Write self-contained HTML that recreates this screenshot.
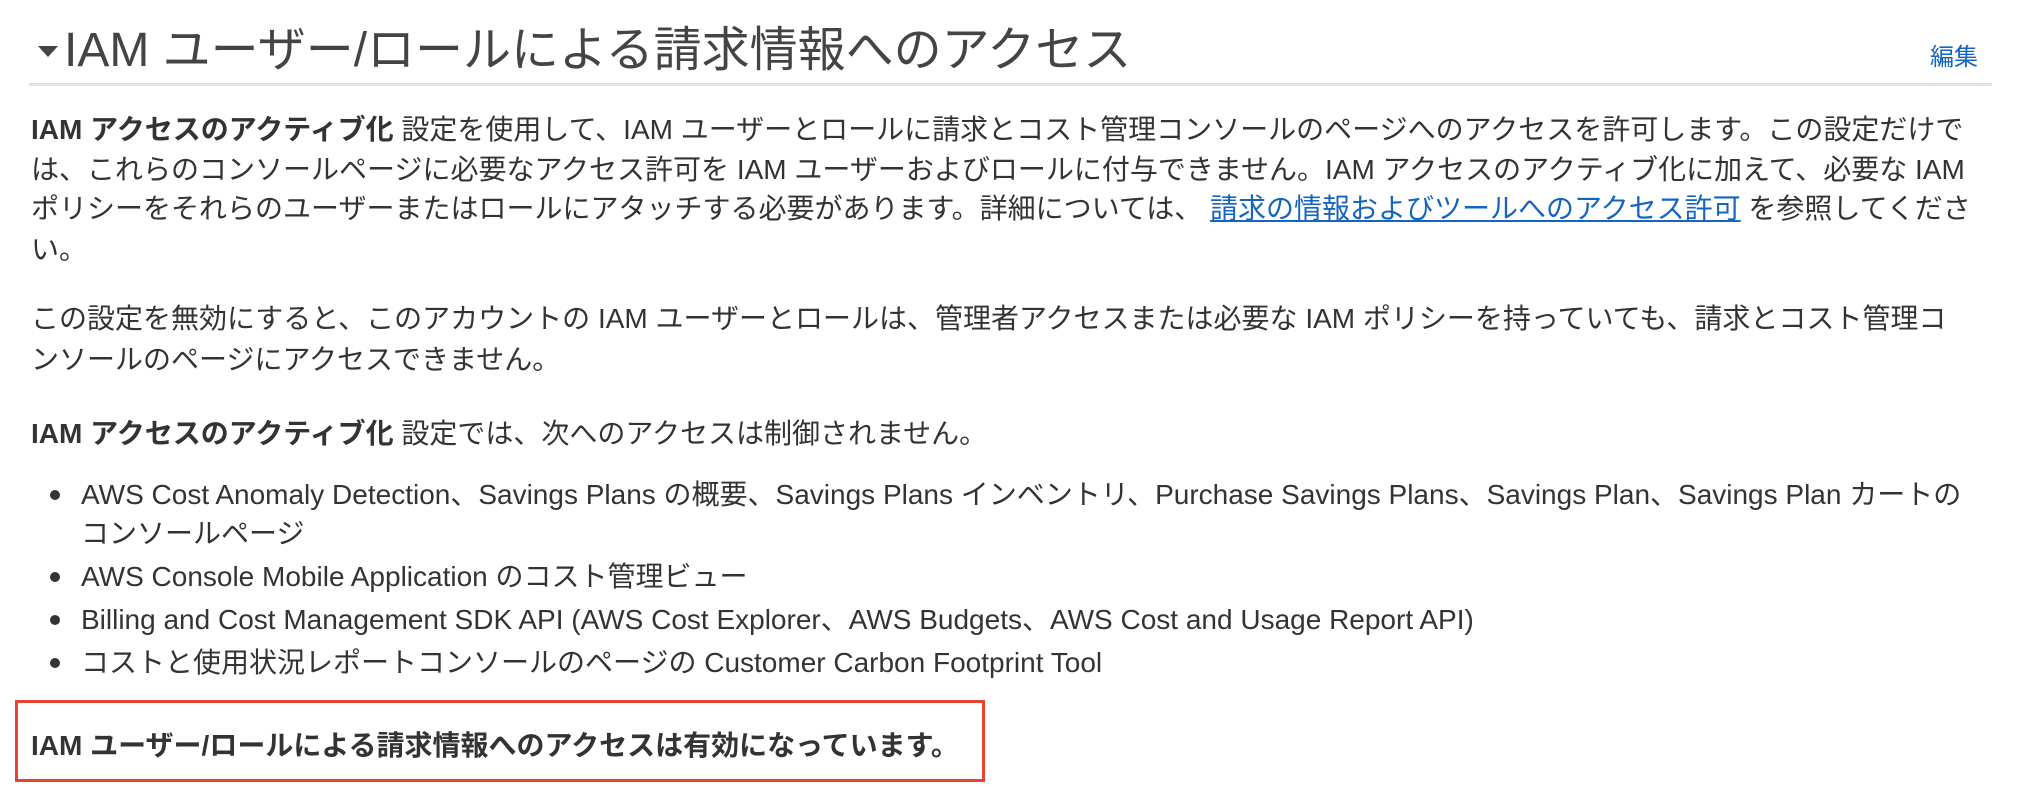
<!DOCTYPE html>
<html><head><meta charset="utf-8"><style>
html,body{margin:0;padding:0;background:#fff;width:2028px;height:802px;overflow:hidden}
body{font-family:"Liberation Sans","Noto Sans CJK JP",sans-serif;color:#333;position:relative}
.l{position:absolute;left:31px;font-size:28px;line-height:39px;white-space:nowrap}
.b{font-weight:bold}
a{color:#1565c0;text-decoration:underline}
.dot{position:absolute;left:50px;width:10px;height:10px;border-radius:50%;background:#333}
</style></head><body>
<div style="position:absolute;left:38px;top:46px;width:0;height:0;border-left:10px solid transparent;border-right:10px solid transparent;border-top:11px solid #444"></div>
<div style="position:absolute;left:64px;top:20px;font-size:48px;line-height:62px;color:#444;white-space:nowrap">IAM ユーザー/ロールによる請求情報へのアクセス</div>
<div style="position:absolute;left:1930px;top:42px;font-size:24px;line-height:32px;color:#1565c0">編集</div>
<div style="position:absolute;left:29px;top:83px;width:1963px;height:3px;background:#e3e3e3"></div>

<div class="l" style="top:110px"><span class="b">IAM アクセスのアクティブ化</span> 設定を使用して、IAM ユーザーとロールに請求とコスト管理コンソールのページへのアクセスを許可します。この設定だけで</div>
<div class="l" style="top:150px">は、これらのコンソールページに必要なアクセス許可を IAM ユーザーおよびロールに付与できません。IAM アクセスのアクティブ化に加えて、必要な IAM</div>
<div class="l" style="top:189px">ポリシーをそれらのユーザーまたはロールにアタッチする必要があります。詳細については、 <a>請求の情報およびツールへのアクセス許可</a> を参照してくださ</div>
<div class="l" style="top:230px">い。</div>

<div class="l" style="top:299px">この設定を無効にすると、このアカウントの IAM ユーザーとロールは、管理者アクセスまたは必要な IAM ポリシーを持っていても、請求とコスト管理コ</div>
<div class="l" style="top:340px">ンソールのページにアクセスできません。</div>

<div class="l" style="top:414px"><span class="b">IAM アクセスのアクティブ化</span> 設定では、次へのアクセスは制御されません。</div>

<div class="dot" style="top:490px"></div>
<div class="l" style="left:81px;top:475px">AWS Cost Anomaly Detection、Savings Plans の概要、Savings Plans インベントリ、Purchase Savings Plans、Savings Plan、Savings Plan カートの</div>
<div class="l" style="left:81px;top:514px">コンソールページ</div>
<div class="dot" style="top:572px"></div>
<div class="l" style="left:81px;top:557px">AWS Console Mobile Application のコスト管理ビュー</div>
<div class="dot" style="top:615px"></div>
<div class="l" style="left:81px;top:600px">Billing and Cost Management SDK API (AWS Cost Explorer、AWS Budgets、AWS Cost and Usage Report API)</div>
<div class="dot" style="top:658px"></div>
<div class="l" style="left:81px;top:643px">コストと使用状況レポートコンソールのページの Customer Carbon Footprint Tool</div>

<div style="position:absolute;left:15px;top:700px;width:964px;height:76px;border:3px solid #e8432e"></div>
<div class="l b" style="top:726px">IAM ユーザー/ロールによる請求情報へのアクセスは有効になっています。</div>
</body></html>
